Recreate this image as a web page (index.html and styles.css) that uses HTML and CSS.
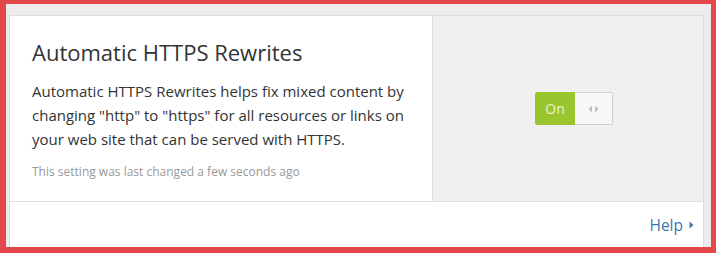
FILE: index.html
```html
<!DOCTYPE html>
<html>
<head>
<meta charset="utf-8">
<link rel="stylesheet" href="styles.css">
</head>
<body>
<div class="frame">
  <div class="card">
    <div class="main">
      <div class="info">
        <h2 class="title">Automatic HTTPS Rewrites</h2>
        <p class="desc">Automatic HTTPS Rewrites helps fix mixed content by changing "http" to "https" for all resources or links on your web site that can be served with HTTPS.</p>
        <p class="meta">This setting was last changed a few seconds ago</p>
      </div>
      <div class="control">
        <div class="toggle">
          <span class="on">On</span>
          <span class="handle">
            <svg width="11" height="8" viewBox="0 0 11 8"><path d="M4 0.5 L0.5 4 L4 7.5 Z" fill="#bdbdbd"/><path d="M7 0.5 L10.5 4 L7 7.5 Z" fill="#bdbdbd"/></svg>
          </span>
        </div>
      </div>
    </div>
    <div class="footer">
      <a class="help">Help <svg width="5" height="8" viewBox="0 0 5 8"><path d="M0.5 0.5 L4.5 4 L0.5 7.5 Z" fill="#3a78b3"/></svg></a>
    </div>
  </div>
</div>
</body>
</html>
```
FILE: styles.css
```css
html, body { margin: 0; padding: 0; }
body {
  background: #e3464b;
  width: 716px;
  height: 253px;
  overflow: hidden;
  font-family: "Open Sans", "Liberation Sans", sans-serif;
}
.frame {
  margin: 4px 5px 0 6px;
  height: 243px;
  background: #ececec;
  padding: 11px 7px 0 3px;
  box-sizing: border-box;
}
.card {
  background: #fff;
  border: 1px solid #dcdcdc;
  border-bottom: none;
  height: 232px;
  box-sizing: border-box;
  display: flex;
  flex-direction: column;
}
.main {
  display: flex;
  height: 185px;
  border-bottom: 1px solid #e0e0e0;
}
.info {
  width: 423px;
  box-sizing: border-box;
  padding: 21px 0 0 22px;
  border-right: 1px solid #e0e0e0;
}
.title {
  margin: 0;
  font-weight: 400;
  font-size: 22px;
  line-height: 30px;
  color: #333;
}
.desc {
  margin: 12px 0 0;
  font-size: 15px;
  line-height: 24px;
  color: #333;
}
.meta {
  margin: 12px 0 0;
  font-size: 12px;
  line-height: 18px;
  color: #999;
}
.control {
  flex: 1;
  background: #f0f0f0;
  display: flex;
  align-items: center;
  justify-content: center;
}
.toggle {
  display: flex;
  height: 33px;
  margin-left: 12px;
}
.on {
  width: 40px;
  background: #9bc52f;
  color: #e8f3c6;
  font-size: 14px;
  display: flex;
  align-items: center;
  justify-content: center;
  border-radius: 2px 0 0 2px;
}
.handle {
  width: 38px;
  background: #f7f7f7;
  border: 1px solid #cfcfcf;
  border-left: none;
  box-sizing: border-box;
  border-radius: 0 2px 2px 0;
  display: flex;
  align-items: center;
  justify-content: center;
}
.footer {
  flex: 1;
  display: flex;
  justify-content: flex-end;
  align-items: center;
  padding-right: 9px;
}
.help {
  color: #3a78b3;
  font-size: 15.5px;
  display: flex;
  align-items: center;
  gap: 6px;
}
```
